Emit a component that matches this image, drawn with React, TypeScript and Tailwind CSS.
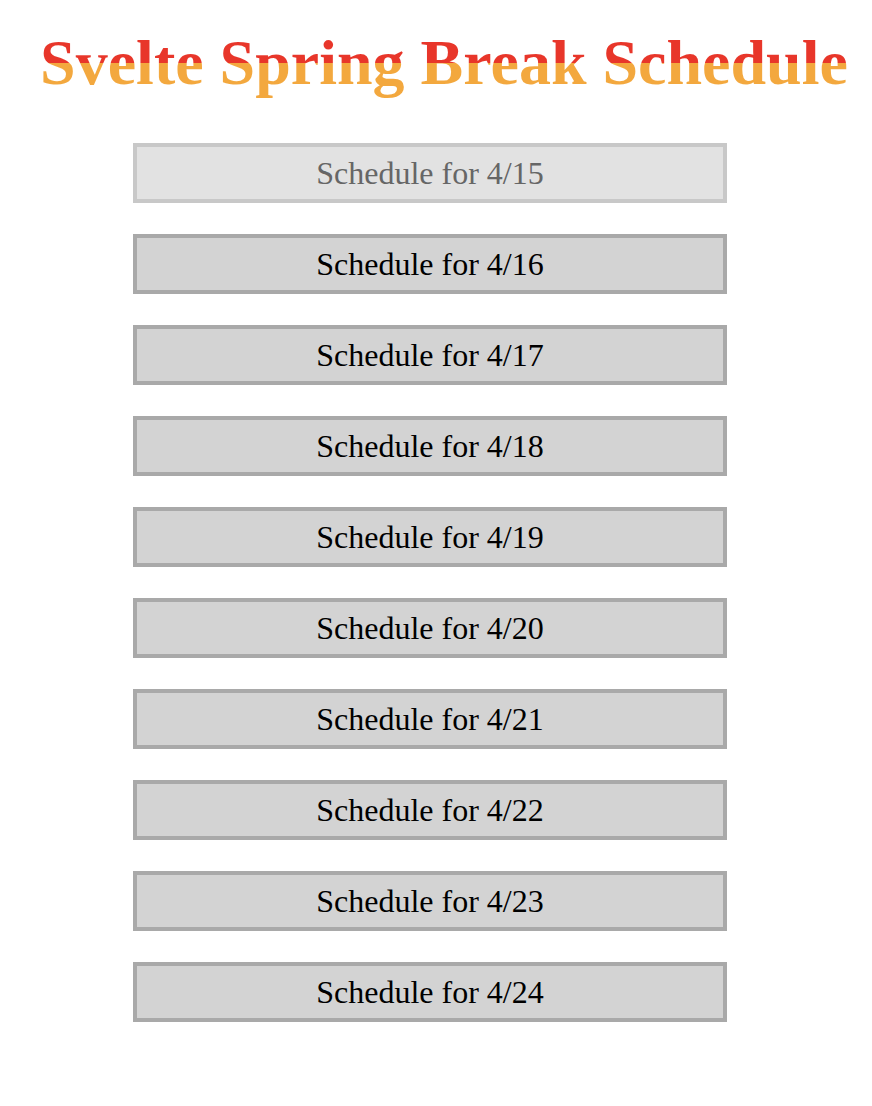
import React from 'react'

const days = ['4/15', '4/16', '4/17', '4/18', '4/19', '4/20', '4/21', '4/22', '4/23', '4/24']

function DayButton({ day, disabled }: { day: string; disabled?: boolean }) {
  return (
    <button
      disabled={disabled}
      className={
        disabled
          ? 'h-[60px] w-[594px] border-4 border-[#c8c8c8] bg-[#e2e2e2] text-[32px] text-[#666666]'
          : 'h-[60px] w-[594px] border-4 border-[#a9a9a9] bg-[#d3d3d3] text-[32px] text-black'
      }
      style={{ fontFamily: '"Liberation Serif", "Times New Roman", serif' }}
    >
      Schedule for {day}
    </button>
  )
}

export default function App() {
  return (
    <div className="min-h-[1106px] bg-white" style={{ fontFamily: '"Liberation Serif", "Times New Roman", serif' }}>
      <h1
        className="mt-[27px] pl-[16px] text-center text-[64px] font-bold leading-[72px] text-transparent bg-clip-text bg-[linear-gradient(#e8362a_36px,#f3a83e_36px)]"
      >
        Svelte Spring Break Schedule
      </h1>
      <div className="mt-[44px] ml-[133px] flex flex-col gap-[31px]">
        {days.map((d, i) => (
          <DayButton key={d} day={d} disabled={i === 0} />
        ))}
      </div>
    </div>
  )
}
